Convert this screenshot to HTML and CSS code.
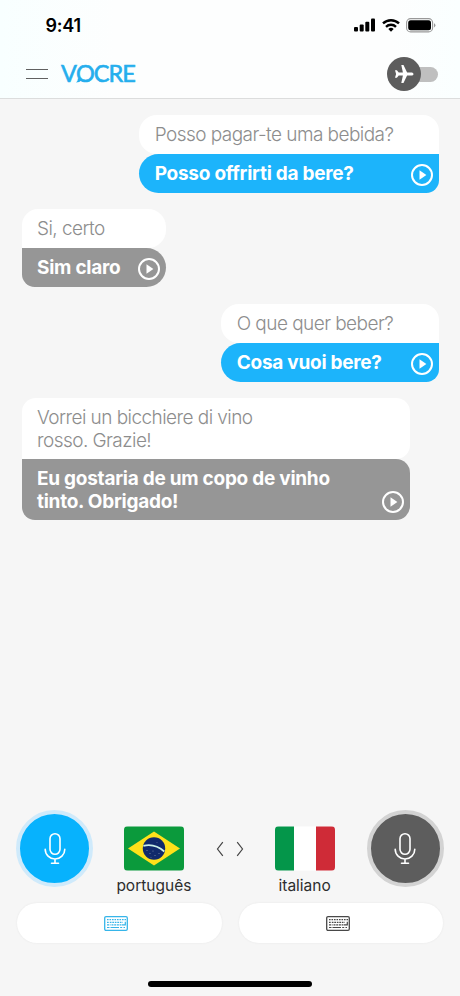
FILE: index.html
```html
<!DOCTYPE html>
<html lang="pt">
<head>
<meta charset="utf-8">
<title>Vocre</title>
<link rel="stylesheet" href="styles.css">
</head>
<body>
<svg class="defs" aria-hidden="true">
  <symbol id="play" viewBox="0 0 24 24"><circle cx="12" cy="12" r="10" fill="none" stroke="currentColor" stroke-width="2"/><path d="M9.5 7.3v9.4l6.9-4.7z" fill="currentColor"/></symbol>
  <symbol id="mic" viewBox="0 0 24 34"><g fill="none" stroke="currentColor" stroke-width="1.6" stroke-linecap="round"><rect x="7" y="1.7" width="10" height="20.6" rx="5"/><path d="M2.2 17.2a9.8 9.8 0 0 0 19.6 0M12 27v4.2M8.5 31.3h7"/></g></symbol>
  <symbol id="keyboard" viewBox="0 0 24 15"><rect x=".7" y=".7" width="22.6" height="13.6" rx="1.3" fill="none" stroke="currentColor" stroke-width="1.3"/><g fill="none" stroke="currentColor" stroke-width="1.2"><path d="M3 3.7h19" stroke-dasharray="1.6 .9"/><path d="M3 6.4h1.8M5.8 6.4h13" stroke-dasharray="1.7 .8"/><path d="M3 8.9h3.6M7.5 8.9h10" stroke-dasharray="2 .7"/><path d="M18 8.9h3.3V5.8"/><path d="M3 11.5h2.5M6.5 11.5h8.5M16.2 11.5h2M19.5 11.5h1.5"/></g></symbol>
</svg>
<div class="screen">
  <header class="top">
    <div class="status">
      <span class="time">9:41</span>
      <svg class="signal" viewBox="0 0 21 14"><rect y="9" width="4" height="4.5" rx="1"/><rect x="5.7" y="6.5" width="4" height="7" rx="1"/><rect x="11.3" y="3.7" width="4" height="9.8" rx="1"/><rect x="17" y=".5" width="4" height="13" rx="1"/></svg>
      <svg class="wifi" viewBox="0 0 18 13"><g fill="none" stroke="#000" stroke-width="2.4"><path d="M1 4.4a11.6 11.6 0 0 1 16 0"/><path d="M4 7.8a7.3 7.3 0 0 1 10 0"/></g><path d="M9 12.7 6.3 10a4 4 0 0 1 5.4 0z"/></svg>
      <svg class="battery" viewBox="0 0 30 15"><rect x=".6" y=".6" width="26" height="13.3" rx="4" fill="none" stroke="#999" stroke-width="1.1"/><rect x="2.2" y="2.2" width="22.8" height="10.1" rx="2.5"/><path d="M28 5.2v4.2q1.4-.6 1.4-2.1T28 5.2" fill="#999"/></svg>
    </div>
    <div class="bar">
      <span class="menu"></span>
      <span class="logo">VOCRE<svg class="tail" viewBox="0 0 6 5"><path d="M5.8 2.2Q3.5 4.6 0 4.6 2 2.8 2 0" fill="currentColor"/></svg></span>
      <span class="toggle"><span class="knob"><svg viewBox="0 0 20 20"><path fill="#fff" d="M19.5 10c0-1.1-1.1-1.6-2.3-1.6h-4.1L9.5 1H7.3l1.6 7.4H4.7L2.9 6.2H1L2.1 10 1 13.8h1.9l1.8-2.2h4.2L7.3 19h2.2l3.6-7.4h4.1c1.2 0 2.3-.5 2.3-1.6z"/></svg></span></span>
    </div>
  </header>

  <main class="chat">
    <article class="bubble mine b1">
      <p class="source">Posso pagar-te uma bebida?</p>
      <p class="result">Posso offrirti da bere?<svg class="play"><use href="#play"/></svg></p>
    </article>
    <article class="bubble theirs b2">
      <p class="source">Si, certo</p>
      <p class="result">Sim claro<svg class="play"><use href="#play"/></svg></p>
    </article>
    <article class="bubble mine b3">
      <p class="source">O que quer beber?</p>
      <p class="result">Cosa vuoi bere?<svg class="play"><use href="#play"/></svg></p>
    </article>
    <article class="bubble theirs b4">
      <p class="source">Vorrei un bicchiere di vino<br>rosso. Grazie!</p>
      <p class="result">Eu gostaria de um copo de vinho<br>tinto. Obrigado!<svg class="play"><use href="#play"/></svg></p>
    </article>
  </main>

  <footer class="controls">
    <div class="languages">
      <span class="mic blue"><svg><use href="#mic"/></svg></span>
      <div class="lang">
        <svg class="flag" viewBox="0 0 60 44"><rect width="60" height="44" fill="#0b9a3c"/><path d="M30 5 56 22 30 39 4 22z" fill="#fee11a"/><circle cx="30" cy="22" r="11.2" fill="#10296b"/><path d="M19.4 19.3Q31 16.7 40.3 25" fill="none" stroke="#c9eee6" stroke-width="1.7"/><g fill="#8795b6"><circle cx="23" cy="24" r=".5"/><circle cx="26" cy="27" r=".5"/><circle cx="29" cy="24.5" r=".5"/><circle cx="31" cy="29" r=".5"/><circle cx="35" cy="27" r=".5"/><circle cx="27" cy="31" r=".4"/><circle cx="33" cy="16" r=".4"/></g></svg>
        <span>português</span>
      </div>
      <svg class="swap" viewBox="0 0 28 16"><path d="M6.8 1.2 1.5 8l5.3 6.8M21.2 1.2 26.5 8l-5.3 6.8" fill="none" stroke="#444" stroke-width="1.2"/></svg>
      <div class="lang">
        <svg class="flag" viewBox="0 0 60 44"><rect width="60" height="44" fill="#fff"/><rect width="19" height="44" fill="#04964a"/><rect x="41" width="19" height="44" fill="#cf2b37"/></svg>
        <span>italiano</span>
      </div>
      <span class="mic gray"><svg><use href="#mic"/></svg></span>
    </div>
    <div class="keyboards">
      <span class="key cyan"><svg><use href="#keyboard"/></svg></span>
      <span class="key"><svg><use href="#keyboard"/></svg></span>
    </div>
    <div class="home"></div>
  </footer>
</div>
</body>
</html>
```

FILE: styles.css
```css
* { box-sizing: border-box; }
body { margin: 0; font-family: Inter, "Liberation Sans", sans-serif; }
svg { display: block; flex: none; }
.defs { display: none; }
.screen { width: 460px; height: 996px; display: flex; flex-direction: column; background: #f6f6f6; overflow: hidden; }

.top { height: 99px; flex: none; background: linear-gradient(90deg, #f8ffff, #fdfefe 25%, #fdfefe 85%, #faffff); border-bottom: 1px solid #dcdddd; }
.status { height: 50px; display: flex; align-items: center; padding: 0 25px 0 45px; }
.time { flex: 1; font-size: 18px; font-weight: 600; letter-spacing: -.2px; line-height: 22px; padding: 1px 0 0 .5px; }
.signal { width: 21px; height: 14px; margin-right: 7px; }
.wifi { width: 18px; height: 13px; margin-right: 6px; }
.battery { width: 30px; height: 15px; margin-right: -1px; }
.bar { height: 48px; display: flex; align-items: center; padding: 0 22px 0 26px; }
.menu { width: 22px; height: 10px; border: solid #606060; border-width: 1px 0; }
.logo { position: relative; margin: -2px 0 0 13px; flex: 1; font: 400 23.5px/28px Lato, sans-serif; font-kerning: none; letter-spacing: -1px; color: #25aeed; -webkit-text-stroke: .6px #25aeed; }
.tail { position: absolute; left: 15px; top: 19px; width: 6px; height: 5px; }
.toggle { display: flex; align-items: center; }
.toggle::after { content: ""; width: 24px; height: 15px; margin-left: -7px; background: #bfbfbf; border-radius: 0 8px 8px 0; }
.knob { flex: none; position: relative; z-index: 1; width: 34px; height: 34px; border-radius: 50%; background: #5d5d5d; display: grid; place-items: center; }
.knob svg { width: 20px; height: 20px; margin-right: 1px; }

.chat { flex: 1; display: flex; flex-direction: column; gap: 16.5px; padding: 15.5px 21.3px 0 21.5px; }
.bubble { display: flex; flex-direction: column; font-size: 19px; line-height: 22.5px; white-space: nowrap; }
.bubble p { margin: 0; padding: 9px 15.5px 7.5px; }
.bubble.mine p { padding-left: 16px; }
.mine { align-self: flex-end; }
.theirs { align-self: flex-start; }
.source { background: #fff; color: #8d8d8d; font-weight: 300; letter-spacing: -.55px; }
.result { position: relative; color: #fff; font-weight: 700; letter-spacing: -.26px; }
.mine .source { border-radius: 18px 16px 0 18px; }
.mine .result { background: #1cb4fb; border-radius: 20px 0 13px 20px; }
.theirs .source { border-radius: 16px 18px 18px 0; }
.theirs .result { background: #969696; border-radius: 0 20px 20px 13px; }
.b4 .source { border-radius: 14px 14px 14px 0; }
.b4 .result { border-radius: 0 14px 14px 13px; }
.bubble.b4 p { padding-bottom: 7px; }
.b1 { width: 300px; }
.b2 { width: 144px; }
.b3 { width: 218px; }
.b4 { width: 388px; }
.play { position: absolute; right: 5px; bottom: 6px; width: 24px; height: 24px; }
.mine .play { bottom: 5.5px; }

.controls { height: 187px; flex: none; display: flex; flex-direction: column; }
.languages { height: 94px; display: flex; justify-content: space-between; align-items: flex-start; padding: 0 16.5px 0 16px; }
.mic { width: 77px; height: 77px; margin-top: 1px; border-radius: 50%; display: grid; place-items: center; color: #fff; }
.mic svg { width: 24px; height: 34px; }
.blue { background: #07b2fd; border: 4px solid #cfeafb; }
.gray { background: #5d5d5d; border: 4px solid #d3d3d3; }
.lang { width: 78px; margin-left: -1px; display: flex; flex-direction: column; align-items: center; padding-top: 17px; font-size: 15.5px; line-height: 20px; color: #2d2d2d; }
.flag { width: 60px; height: 45px; border-radius: 4px; margin-bottom: 4.5px; }
.swap { width: 28px; height: 16px; margin-top: 32px; }
.keyboards { display: flex; gap: 17px; padding: 0 17px; }
.key { flex: 1; height: 40px; padding-right: 6px; border-radius: 20px; background: #fff; box-shadow: 0 0 2px #e5e5e5; display: grid; place-items: center; color: #484848; }
.cyan { color: #36b5e9; }
.key svg { width: 24px; height: 15px; }
.home { width: 164px; height: 6px; margin: 38px auto 0; border-radius: 3px; background: #000; }
```
